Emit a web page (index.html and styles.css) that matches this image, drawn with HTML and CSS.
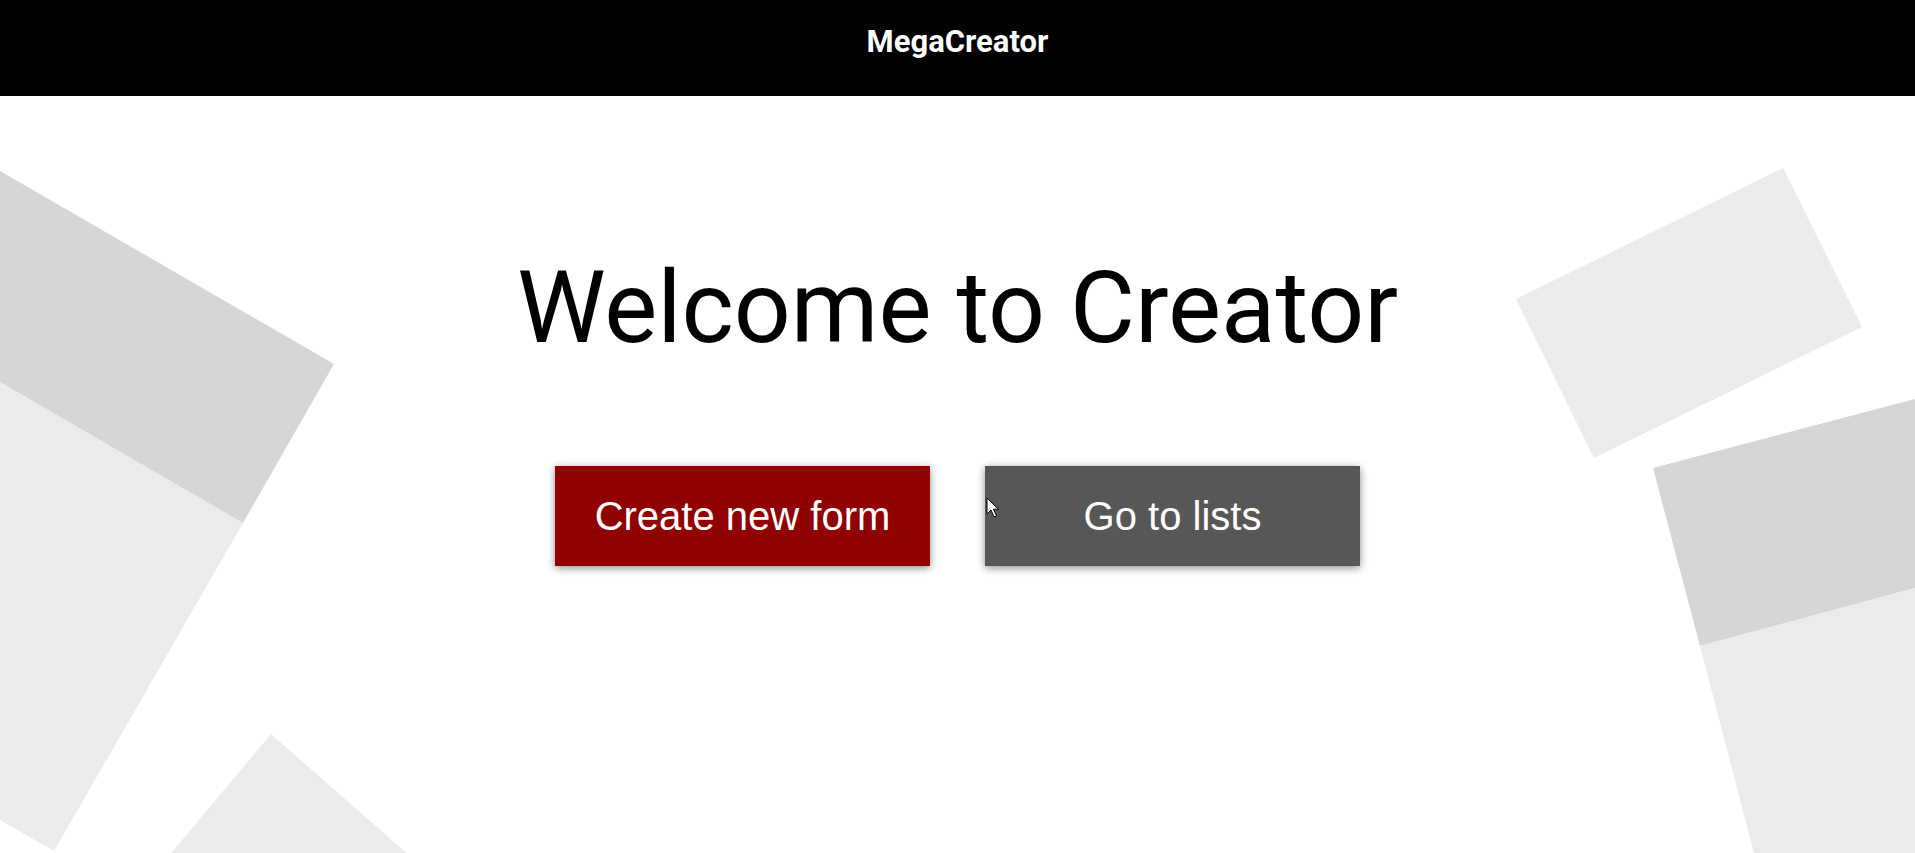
FILE: index.html
```html
<!DOCTYPE html>
<html lang="en">
<head>
<meta charset="utf-8">
<title>MegaCreator</title>
<link rel="stylesheet" href="styles.css">
</head>
<body>
<svg class="backdrop" viewBox="0 0 1915 853" preserveAspectRatio="none" aria-hidden="true">
  <polygon class="light" points="0,382 243,523 54,851 0,820"/>
  <polygon class="dark" points="0,171 334,364 243,523 0,382"/>
  <polygon class="light" points="271,734 411,857 168,857"/>
  <polygon class="light" points="1516,299 1783,168 1862,327 1594,458"/>
  <polygon class="dark" points="1653,468 1915,399 1915,588 1700,646"/>
  <polygon class="light" points="1700,646 1915,588 1915,857 1755,857"/>
</svg>
<header class="topbar">
  <span class="brand">MegaCreator</span>
</header>
<main class="hero">
  <h1 class="title">Welcome to Creator</h1>
  <div class="actions">
    <button class="btn btn-primary">Create new form</button>
    <button class="btn btn-secondary">Go to lists</button>
  </div>
</main>
<svg class="cursor" viewBox="0 0 13 21" aria-hidden="true">
  <path d="M1,1 L1,17 L5,13 L8,20 L10.5,19 L7.5,12.2 L12.5,12.2 Z" fill="#fff" stroke="#000" stroke-width="1" stroke-linejoin="miter"/>
</svg>
</body>
</html>
```

FILE: styles.css
```css
html, body {
  margin: 0;
  padding: 0;
  height: 100%;
  overflow: hidden;
  background: #ffffff;
}

body {
  position: relative;
  font-family: Roboto, "Liberation Sans", Arial, sans-serif;
}

.backdrop {
  position: absolute;
  left: 0;
  top: 0;
  width: 100%;
  height: 100%;
  z-index: 0;
}

.backdrop .light { fill: #ebebeb; }
.backdrop .dark { fill: #d6d6d6; }

.topbar {
  position: relative;
  z-index: 1;
  height: 96px;
  box-sizing: border-box;
  padding-top: 23px;
  background: #000000;
  display: flex;
  justify-content: center;
  align-items: flex-start;
}

.brand {
  color: #ffffff;
  font-family: Roboto, sans-serif;
  font-weight: 700;
  font-size: 31px;
  line-height: normal;
}

.hero {
  position: relative;
  z-index: 1;
  display: flex;
  flex-direction: column;
  align-items: center;
}

.title {
  margin: 153px 0 0;
  font-family: Roboto, sans-serif;
  font-weight: 400;
  font-size: 100px;
  line-height: normal;
  color: #000000;
}

.actions {
  margin-top: 100px;
  display: flex;
  gap: 55px;
}

.btn {
  width: 375px;
  height: 100px;
  border: none;
  padding: 0;
  color: #ffffff;
  font-family: "Liberation Sans", Arial, sans-serif;
  font-size: 40px;
  box-shadow: 0 2px 8px rgba(0, 0, 0, 0.45);
  cursor: pointer;
}

.btn-primary { background: #900000; }
.btn-secondary { background: #575757; }

.cursor {
  position: absolute;
  left: 986px;
  top: 497px;
  width: 13px;
  height: 21px;
  z-index: 2;
}
```
